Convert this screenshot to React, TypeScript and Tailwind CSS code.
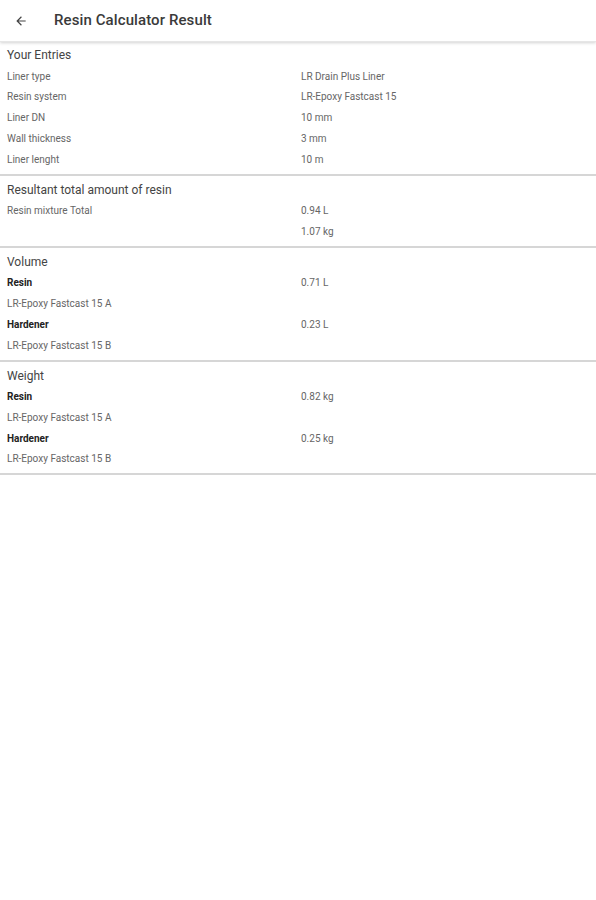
import React from "react";

type Row = { label: string; value?: string; bold?: boolean };

const sections: { title: string; rows: Row[] }[] = [
  {
    title: "Your Entries",
    rows: [
      { label: "Liner type", value: "LR Drain Plus Liner" },
      { label: "Resin system", value: "LR-Epoxy Fastcast 15" },
      { label: "Liner DN", value: "10 mm" },
      { label: "Wall thickness", value: "3 mm" },
      { label: "Liner lenght", value: "10 m" },
    ],
  },
  {
    title: "Resultant total amount of resin",
    rows: [
      { label: "Resin mixture Total", value: "0.94 L" },
      { label: "", value: "1.07 kg" },
    ],
  },
  {
    title: "Volume",
    rows: [
      { label: "Resin", value: "0.71 L", bold: true },
      { label: "LR-Epoxy Fastcast 15 A" },
      { label: "Hardener", value: "0.23 L", bold: true },
      { label: "LR-Epoxy Fastcast 15 B" },
    ],
  },
  {
    title: "Weight",
    rows: [
      { label: "Resin", value: "0.82 kg", bold: true },
      { label: "LR-Epoxy Fastcast 15 A" },
      { label: "Hardener", value: "0.25 kg", bold: true },
      { label: "LR-Epoxy Fastcast 15 B" },
    ],
  },
];

export default function App() {
  return (
    <div
      className="w-[596px] min-h-[900px] bg-white"
      style={{ fontFamily: "Roboto, 'Noto Sans', sans-serif" }}
    >
      <div className="h-[42px] flex items-center shadow-[0_1px_3px_rgba(0,0,0,0.18)] border-b border-[#e6e6e6] relative">
        <svg
          className="ml-[14px]"
          width="14"
          height="14"
          viewBox="0 0 24 24"
          fill="#444"
        >
          <path d="M20 11H7.83l5.59-5.59L12 4l-8 8 8 8 1.41-1.41L7.83 13H20v-2z" />
        </svg>
        <div className="ml-[26px] text-[15px] font-medium text-[#3a3a3a] tracking-[0.1px]">
          Resin Calculator Result
        </div>
      </div>
      {sections.map((s, i) => (
        <div
          key={i}
          className={
            "border-b-2 border-[#d6d6d6] pb-[4px] " +
            (i === 0 ? "pt-[3px]" : "pt-[4px]")
          }
        >
          <div className="h-[20.75px] flex items-center pl-[7px] text-[12px] text-[#444]">
            {s.title}
          </div>
          {s.rows.map((r, j) => (
            <div key={j} className="h-[20.75px] flex items-center text-[10px]">
              <div
                className={
                  "w-[301px] pl-[7px] " +
                  (r.bold ? "font-bold text-[#222]" : "text-[#666]")
                }
              >
                {r.label}
              </div>
              <div className="text-[#666]">{r.value}</div>
            </div>
          ))}
        </div>
      ))}
    </div>
  );
}
